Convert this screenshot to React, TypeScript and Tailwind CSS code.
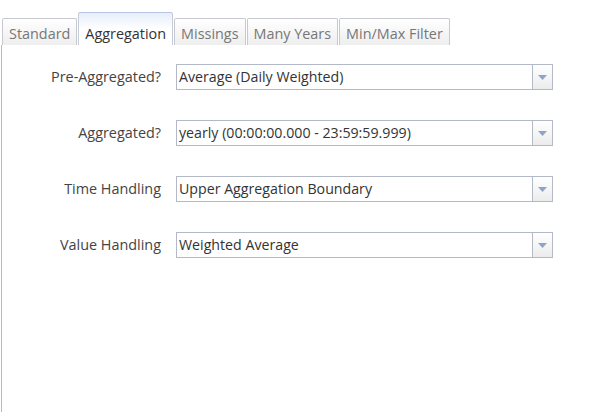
import React from 'react';

const tabs = ['Standard', 'Aggregation', 'Missings', 'Many Years', 'Min/Max Filter'];

const rows = [
  { label: 'Pre-Aggregated?', value: 'Average (Daily Weighted)' },
  { label: 'Aggregated?', value: 'yearly (00:00:00.000 - 23:59:59.999)' },
  { label: 'Time Handling', value: 'Upper Aggregation Boundary' },
  { label: 'Value Handling', value: 'Weighted Average' },
];

function Select({ value }: { value: string }) {
  return (
    <div className="flex h-[26px] w-[377px] border border-[#b4b9c8] bg-white">
      <div className="flex-1 pl-[2px] text-[14.2px] leading-[24px] text-[#333] whitespace-nowrap overflow-hidden">{value}</div>
      <div className="flex w-[20px] items-center justify-center border-l border-[#b4b9c8] bg-gradient-to-b from-white to-[#ececec]">
        <svg width="9" height="5" viewBox="0 0 9 5">
          <path d="M0 0 H9 L4.5 5 Z" fill="#8fa3c6" />
        </svg>
      </div>
    </div>
  );
}

export default function App() {
  return (
    <div
      className="flex h-[412px] w-[608px] flex-col bg-white text-[14.4px]"
      style={{ fontFamily: '"Open Sans", sans-serif' }}
    >
      <div className="flex h-[45px] items-end gap-px pl-[2px]">
        {tabs.map((t) => {
          const active = t === 'Aggregation';
          return active ? (
            <div
              key={t}
              className="flex h-[33px] items-end rounded-t-[2px] border border-b-0 border-[#c5cbd8] border-t-[#b5c6e0] bg-gradient-to-b from-[#e6eefa] via-white to-white px-[6px] leading-[22px] text-[#333]"
            >
              {t}
            </div>
          ) : (
            <div
              key={t}
              className="flex h-[27px] items-end rounded-t-[2px] border border-b-0 border-[#c8c8d0] bg-gradient-to-b from-white to-[#eeeeee] px-[6px] leading-[22px] text-[#777]"
            >
              {t}
            </div>
          );
        })}
      </div>
      <div className="ml-[1px] flex-1 border-l border-[#b9b9c3] pt-[19px]">
        <div className="flex flex-col gap-[30px]">
          {rows.map((r) => (
            <div key={r.label} className="flex items-center">
              <div className="w-[159px] text-right text-[#444]">{r.label}</div>
              <div className="ml-[15px]">
                <Select value={r.value} />
              </div>
            </div>
          ))}
        </div>
      </div>
    </div>
  );
}
